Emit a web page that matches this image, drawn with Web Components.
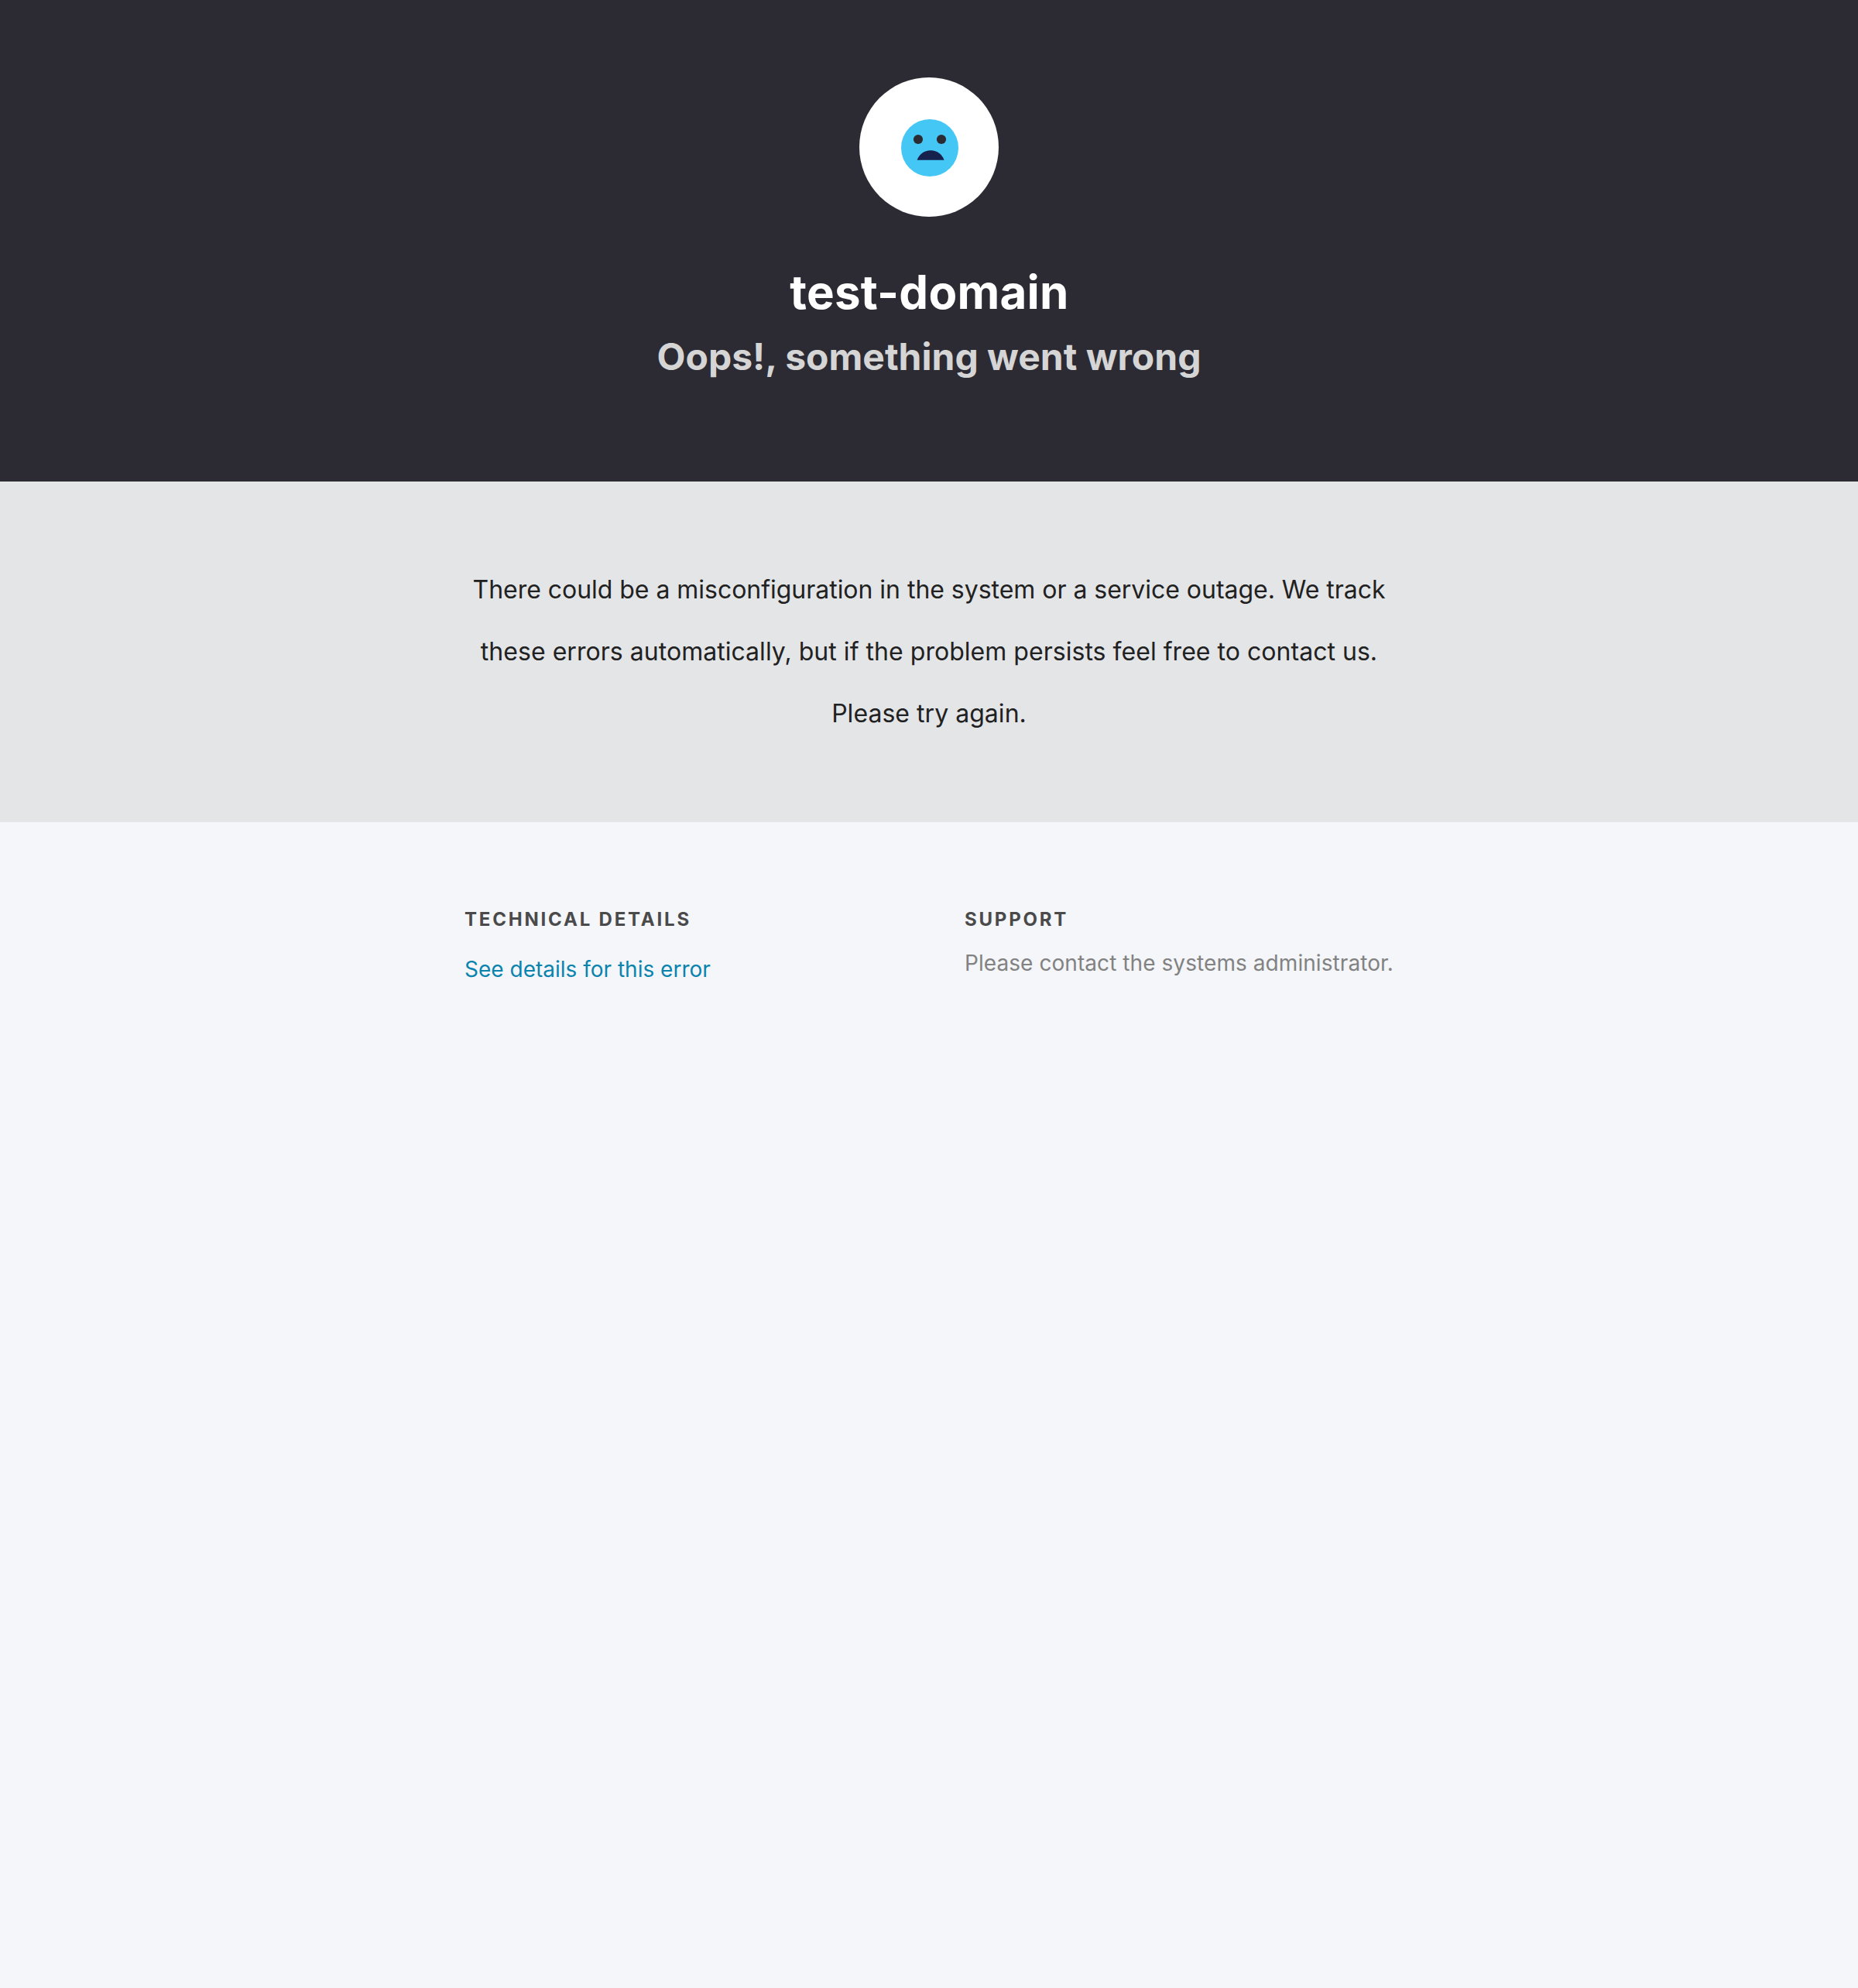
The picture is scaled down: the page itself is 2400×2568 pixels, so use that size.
<!DOCTYPE html>
<html lang="en">
<head>
<meta charset="utf-8">
<title>Oops!, something went wrong</title>
<style>
  html, body { margin: 0; height: 100%; }
  body { font-family: Inter, "Liberation Sans", sans-serif; background: #f4f6fa; }
</style>
</head>
<body>
<error-page></error-page>

<template id="sad-badge">
  <style>
    :host { display: block; width: 180px; height: 180px; border-radius: 50%; background: #fff; }
    svg { display: block; }
  </style>
  <svg width="180" height="180" viewBox="0 0 180 180" aria-hidden="true">
    <circle cx="91" cy="91" r="37" fill="#44c7f4"/>
    <circle cx="76" cy="80" r="6.1" fill="#2b2b33"/>
    <circle cx="106" cy="80" r="6.1" fill="#2b2b33"/>
    <path d="M74.6 106.700C77.400 99.400 83.500 94.300 92.100 94.300S106.800 99.400 109.600 106.700Z" fill="#16214d"/>
  </svg>
</template>

<template id="error-header">
  <style>
    :host { display: flex; flex-direction: column; align-items: center; box-sizing: border-box; height: 622px; padding-top: 100px; background: #2c2b34; text-align: center; }
    h1 { margin: 58px 0 0; padding-left: 1px; font-size: 60px; line-height: 78px; font-weight: 700; letter-spacing: .25px; color: #fff; }
    h2 { margin: 15px 0 0; font-size: 48px; line-height: 60px; font-weight: 700; color: #d5d5d5; }
  </style>
  <sad-badge></sad-badge>
  <h1><slot name="title"></slot></h1>
  <h2><slot name="subtitle"></slot></h2>
</template>

<template id="error-message">
  <style>
    :host { display: block; padding: 100px 0; background: #e4e5e7; color: #212122; text-align: center; font-size: 32px; line-height: 80px; }
    p { margin: 0 auto; width: 1200px; white-space: nowrap; }
  </style>
  <p><slot></slot></p>
</template>

<template id="info-column">
  <style>
    :host { display: block; }
    h3 { margin: 0; font-size: 24px; line-height: 30px; font-weight: 700; letter-spacing: 2.8px; color: #4a4a4a; }
    div { margin-top: var(--gap, 19px); font-size: 28px; line-height: 44px; color: #828282; white-space: nowrap; }
  </style>
  <h3><slot name="heading"></slot></h3>
  <div><slot></slot></div>
</template>

<template id="error-page">
  <style>
    :host { display: block; min-height: 2568px; background: #f4f6fa; }
    main { display: flex; justify-content: space-between; width: 1200px; margin: 0 auto; padding-top: 111px; }
    a { color: #0a84ae; text-decoration: none; }
    .first { letter-spacing: -.03px; }
    .second { letter-spacing: .035px; }
    .support { letter-spacing: .07px; }
    .details { --gap: 27px; }
  </style>
  <error-header>
    <span slot="title">test-domain</span>
    <span slot="subtitle">Oops!, something went wrong</span>
  </error-header>
  <error-message><span class="first">There could be a misconfiguration in the system or a service outage. We track</span><br><span class="second">these errors automatically, but if the problem persists feel free to contact us.</span><br><span class="second">Please try again.</span></error-message>
  <main>
    <info-column class="details"><span slot="heading">TECHNICAL DETAILS</span><a href="#">See details for this error</a></info-column>
    <info-column><span slot="heading">SUPPORT</span><span class="support">Please contact the systems administrator.</span></info-column>
  </main>
</template>

<script>
  for (const name of ["sad-badge", "error-header", "error-message", "info-column", "error-page"]) {
    customElements.define(name, class extends HTMLElement {
      constructor() {
        super();
        this.attachShadow({ mode: "open" })
          .append(document.getElementById(name).content.cloneNode(true));
      }
    });
  }
</script>
</body>
</html>
